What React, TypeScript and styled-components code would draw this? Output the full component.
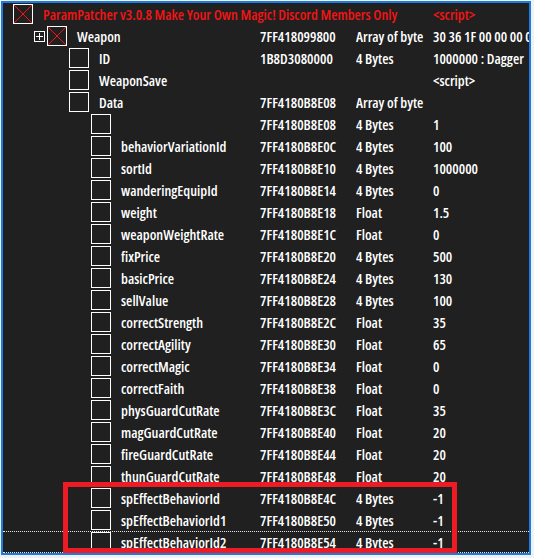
import styled, { createGlobalStyle } from 'styled-components';

type Entry = {
    desc: string;
    level: number;
    addr?: string;
    type?: string;
    value?: string;
    title?: boolean;
    crossed?: boolean;
    expandable?: boolean;
};

const params: [string, string, string, string][] = [
    ['', '7FF4180B8E08', '4 Bytes', '1'],
    ['behaviorVariationId', '7FF4180B8E0C', '4 Bytes', '100'],
    ['sortId', '7FF4180B8E10', '4 Bytes', '1000000'],
    ['wanderingEquipId', '7FF4180B8E14', '4 Bytes', '0'],
    ['weight', '7FF4180B8E18', 'Float', '1.5'],
    ['weaponWeightRate', '7FF4180B8E1C', 'Float', '0'],
    ['fixPrice', '7FF4180B8E20', '4 Bytes', '500'],
    ['basicPrice', '7FF4180B8E24', '4 Bytes', '130'],
    ['sellValue', '7FF4180B8E28', '4 Bytes', '100'],
    ['correctStrength', '7FF4180B8E2C', 'Float', '35'],
    ['correctAgility', '7FF4180B8E30', 'Float', '65'],
    ['correctMagic', '7FF4180B8E34', 'Float', '0'],
    ['correctFaith', '7FF4180B8E38', 'Float', '0'],
    ['physGuardCutRate', '7FF4180B8E3C', 'Float', '35'],
    ['magGuardCutRate', '7FF4180B8E40', 'Float', '20'],
    ['fireGuardCutRate', '7FF4180B8E44', 'Float', '20'],
    ['thunGuardCutRate', '7FF4180B8E48', 'Float', '20'],
    ['spEffectBehaviorId', '7FF4180B8E4C', '4 Bytes', '-1'],
    ['spEffectBehaviorId1', '7FF4180B8E50', '4 Bytes', '-1'],
    ['spEffectBehaviorId2', '7FF4180B8E54', '4 Bytes', '-1'],
];

const entries: Entry[] = [
    {
        desc: 'ParamPatcher v3.0.8 Make Your Own Magic! Discord Members Only',
        level: 0,
        value: '<script>',
        title: true,
        crossed: true,
    },
    {
        desc: 'Weapon',
        level: 1,
        addr: '7FF418099800',
        type: 'Array of byte',
        value: '30 36 1F 00 00 00 00 00 00 00',
        crossed: true,
        expandable: true,
    },
    { desc: 'ID', level: 2, addr: '1B8D3080000', type: '4 Bytes', value: '1000000 : Dagger' },
    { desc: 'WeaponSave', level: 2, value: '<script>' },
    { desc: 'Data', level: 2, addr: '7FF4180B8E08', type: 'Array of byte' },
    ...params.map(([desc, addr, type, value]) => ({ desc, level: 3, addr, type, value })),
];

const checkOffset = (level: number) => (level === 0 ? 10 : 22 + 22 * level);

const App = () => {
    return (
        <>
            <GlobalStyle />
            <Window>
                <Panel>
                    <List>
                        {entries.map((e, i) => (
                            <Row key={i} $focused={i === entries.length - 1} $title={e.title}>
                                <DescCell $indent={checkOffset(e.level) - (e.expandable ? 13 : 0)}>
                                    {e.expandable && (
                                        <Expander>
                                            <svg width='9' height='9' viewBox='0 0 9 9'>
                                                <path d='M1 4.5H8M4.5 1V8' stroke='#ffffff' strokeWidth='1' />
                                            </svg>
                                        </Expander>
                                    )}
                                    <CheckBox>
                                        {e.crossed && (
                                            <svg width='18' height='18' viewBox='0 0 18 18'>
                                                <path d='M0 0L18 18M18 0L0 18' stroke='#ff1010' strokeWidth='1' />
                                            </svg>
                                        )}
                                    </CheckBox>
                                    <Label>{e.desc}</Label>
                                </DescCell>
                                <Cell>{e.addr}</Cell>
                                <Cell>{e.type}</Cell>
                                <Cell>{e.value}</Cell>
                            </Row>
                        ))}
                        <Highlight />
                    </List>
                </Panel>
            </Window>
        </>
    );
};

export default App;

const GlobalStyle = createGlobalStyle`
    body {
        margin: 0;
        background: #eef1f6;
    }
`;

const Window = styled.div`
    width: 534px;
    height: 558px;
    padding: 1px 0 0 1px;
    box-sizing: border-box;
    background: #eef1f6;
`;

const Panel = styled.div`
    width: 530px;
    height: 554px;
    box-sizing: border-box;
    border: 2px solid #1c7ce0;
    background: #202020;
    overflow: hidden;
`;

const List = styled.div`
    position: relative;
    height: 100%;
    font-family: 'Open Sans', 'Roboto', sans-serif;
    font-stretch: 75%;
    font-size: 14.4px;
    font-weight: 650;
    color: #ffffff;
`;

const Row = styled.div<{ $focused?: boolean; $title?: boolean }>`
    position: relative;
    height: 22px;
    display: grid;
    grid-template-columns: 257px 96px 77px 1fr;
    align-items: center;
    white-space: nowrap;
    color: ${(p) => (p.$title ? '#f41414' : '#ffffff')};

    &::after {
        content: '';
        display: ${(p) => (p.$focused ? 'block' : 'none')};
        position: absolute;
        inset: 0;
        border-top: 1px dotted #e8e8e8;
        border-bottom: 1px dotted #e8e8e8;
        pointer-events: none;
    }
`;

const DescCell = styled.div<{ $indent: number }>`
    display: flex;
    align-items: center;
    height: 22px;
    padding-left: ${(p) => p.$indent}px;
    overflow: visible;
`;

const Expander = styled.div`
    flex: none;
    width: 11px;
    height: 11px;
    box-sizing: border-box;
    margin-right: 2px;
    border: 1px solid #ffffff;
    svg {
        display: block;
    }
`;

const CheckBox = styled.div`
    flex: none;
    align-self: flex-start;
    margin-top: 1px;
    width: 20px;
    height: 20px;
    box-sizing: border-box;
    border: 1px solid #ffffff;
    svg {
        display: block;
    }
`;

const Label = styled.span`
    margin-left: 10px;
`;

const Cell = styled.div`
    overflow: hidden;
`;

const Highlight = styled.div`
    position: absolute;
    left: 60px;
    top: 479px;
    width: 394px;
    height: 71px;
    box-sizing: border-box;
    border: 5px solid #ed1c24;
    pointer-events: none;
`;
